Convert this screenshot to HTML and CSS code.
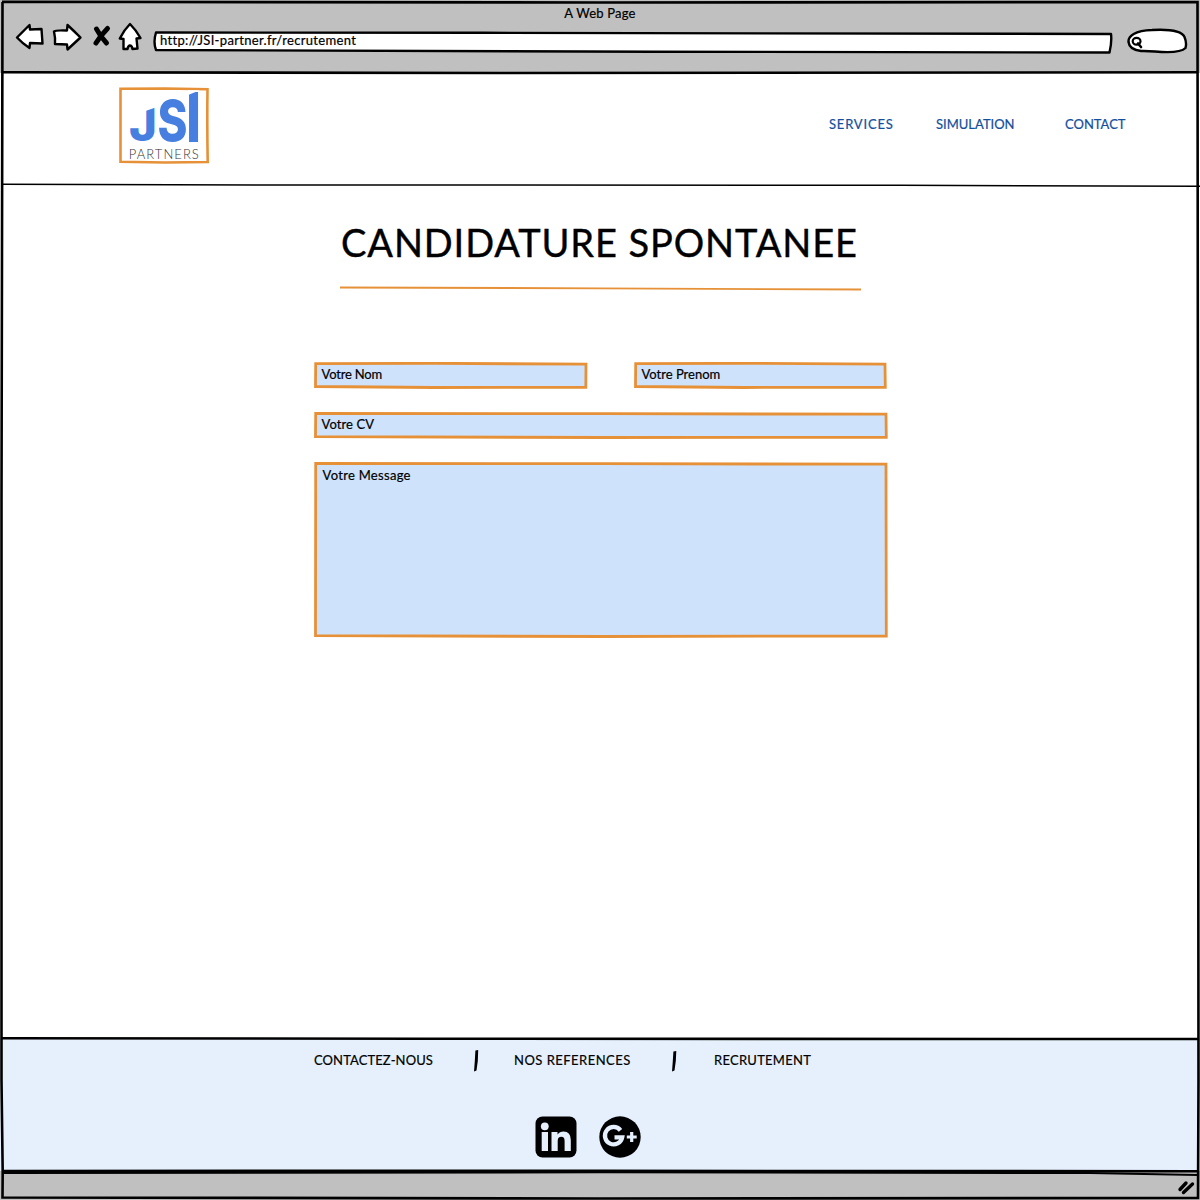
FILE: index.html
```html
<!DOCTYPE html>
<html lang="fr">
<head>
<meta charset="utf-8">
<title>A Web Page</title>
<link rel="stylesheet" href="styles.css">
</head>
<body>
<div class="window">
  <header class="chrome">
    <div class="chrome-title">A Web Page</div>
    <div class="toolbar">
      <svg class="nav-icons" width="130" height="30" viewBox="14 22 130 30">
        <g fill="#fff" stroke="#000" stroke-width="2.4" stroke-linejoin="round">
          <path d="M17 37.5 L29.5 25 L30 29.5 L41.5 29 L42.5 43.5 L30 43 L29.5 48 Q22 43 17 37.5Z"/>
          <path d="M54 31.5 Q55 30 67 30.5 L67.5 25 Q74 31 80.5 37.5 L67.5 49.5 L67 44.5 L55 44 Q55.5 38 54 31.5Z"/>
          <path d="M130 24 Q136 30 140.500 38 L136.500 38.500 L137.500 48.500 L132.500 49 Q132 45.500 129.800 45.500 Q128 46 127.500 49 L123.500 49 L123.500 39 L119.800 38.500 Q124 30 130 24Z"/>
        </g>
        <path d="M96.500 29 Q100 36 106.500 43 M107.500 28.500 Q101 35 96 43" fill="none" stroke="#000" stroke-width="5" stroke-linecap="round"/>
      </svg>
      <div class="address">
        <svg class="sketch" viewBox="0 0 960 24"><path d="M3 2.500 L330 2.800 L958 4 Q959 12 956.500 22.500 L500 21.700 L3 20 Q0 12 3 2.500Z" fill="#fff" stroke="#000" stroke-width="2.400" stroke-linejoin="round"/></svg>
        <span class="url">http://JSI-partner.fr/recrutement</span>
      </div>
      <svg class="search" width="62" height="28" viewBox="1127 27 62 28">
        <path d="M1141 51 C1132 50 1129 46 1128.500 42 C1128 36 1135 30.500 1152 30 C1170 29 1182 31.500 1184.500 37 Q1187 43 1185.500 48 C1181 52.500 1166 52.500 1155 51.500 Q1147 50.800 1141 51Z" fill="#fff" stroke="#000" stroke-width="2.400"/>
        <ellipse cx="1136.600" cy="41.300" rx="3.900" ry="3.400" fill="none" stroke="#000" stroke-width="2.200"/>
        <path d="M1138 43.500 L1141 47" stroke="#000" stroke-width="2.600" stroke-linecap="round"/>
      </svg>
    </div>
  </header>

  <div class="site-header">
    <svg class="logo" width="92" height="78" viewBox="118 86 92 78">
      <path d="M120.500 88.800 L165 88.500 L207.500 89.300 Q207 120 207.700 162 L165 162.500 L120.500 161.700Z" fill="#fff" stroke="#e69138" stroke-width="2.600"/>
      <g class="logo-mark">
        <text x="129" y="141" font-size="46" textLength="28" lengthAdjust="spacingAndGlyphs">J</text>
        <text x="157.500" y="141" font-size="57" textLength="30" lengthAdjust="spacingAndGlyphs">S</text>
        <text class="logo-i" x="184" y="141.500" font-size="69">I</text>
      </g>
      <path d="M144 105 H157 V107 L144 111.500Z M188 90.300 H200 L188 95Z" fill="#fff"/>
      <text class="logo-sub" x="128.800" y="158.800" textLength="70">PARTNERS</text>
    </svg>
    <nav class="menu">
      <a class="services">SERVICES</a><a class="simulation">SIMULATION</a><a class="contact">CONTACT</a>
    </nav>
  </div>

  <main class="content">
    <h1>CANDIDATURE SPONTANEE</h1>
    <svg class="underline" width="522" height="6" viewBox="340 286 522 6"><path d="M340 287.500 L600 288.300 L861 289.500" fill="none" stroke="#e69138" stroke-width="1.800"/></svg>
    <form class="form">
      <div class="field nom">
        <svg class="sketch" viewBox="0 0 274 27"><path d="M1.700 1.700 L120 1.300 L272 2.200 L271.800 25.300 L120 25.500 L1.500 24.500Z"/></svg>
        <label>Votre Nom</label>
      </div>
      <div class="field prenom">
        <svg class="sketch" viewBox="0 0 253 27"><path d="M1.700 1.700 L110 1.300 L251 2.200 L251.300 25.300 L110 25.500 L1.500 24.500Z"/></svg>
        <label>Votre Prenom</label>
      </div>
      <div class="field cv">
        <svg class="sketch" viewBox="0 0 574 27"><path d="M1.700 1.500 L290 1.700 L572 2.200 L572.300 25.300 L290 25.500 L1.500 24.700Z"/></svg>
        <label>Votre CV</label>
      </div>
      <div class="field message">
        <svg class="sketch" viewBox="0 0 574 176"><path d="M1.700 1.500 L290 1.700 L572 2.200 L572.300 174 L290 174.500 L1.500 173.700Z"/></svg>
        <label>Votre Message</label>
      </div>
    </form>
  </main>

  <footer class="footer">
    <div class="footer-links">
      <a class="f1">CONTACTEZ-NOUS</a>
      <svg width="6" height="24" viewBox="0 0 6 24"><path d="M2.400 1.500 L5.200 1 L4.800 12 L3.500 21.500 L1 22.500 L1.800 12Z"/></svg>
      <a class="f2">NOS REFERENCES</a>
      <svg width="6" height="24" viewBox="0 0 6 24"><path d="M2.400 2.500 L5.300 2 L4.800 12 L3.500 21.500 L1 22.500 L1.800 12Z"/></svg>
      <a class="f3">RECRUTEMENT</a>
    </div>
    <div class="social">
      <svg width="42" height="42" viewBox="0 0 42 42">
        <rect x=".5" y=".5" width="41" height="41" rx="7"/>
        <g fill="#e6f0fd"><circle cx="9.800" cy="10.300" r="3.900"/><rect x="6.700" y="16" width="6.300" height="19"/>
        <path d="M16.500 16 H22.500 V18.600 Q24.700 15.500 28.500 15.500 Q35.800 15.500 35.800 24 V35 H29.600 V25 Q29.600 20.800 26.400 20.800 Q22.700 20.800 22.700 25 V35 H16.500Z"/></g>
      </svg>
      <svg width="42" height="42" viewBox="0 0 42 42">
        <circle cx="21" cy="21" r="20.700"/>
        <g fill="none" stroke="#e6f0fd"><path d="M21.500 14.300 A8.700 8.700 0 1 0 23.200 21.300 H15.500" stroke-width="4.300"/><path d="M32.700 16 V26 M27.800 21 H37.700" stroke-width="3.200"/></g>
      </svg>
    </div>
  </footer>
  <div class="statusbar"></div>

  <svg class="frame" width="1200" height="1200" viewBox="0 0 1200 1200">
    <g fill="none" stroke="#000" stroke-width="2.600">
      <path d="M2 1.800 L600 2.500 L1197.500 2 L1198 500 L1198.500 1080 L1198 1198 L600 1198.500 L2.500 1197.500 L2.700 1172 L1.500 1080 L1.500 500 L2.500 2"/>
      <path d="M3 72.300 L500 73 L1198 72.300"/>
      <path d="M2 1038.200 L420 1038.700 L1198 1039"/>
      <path d="M2 1171 L600 1170.800 L1198 1171.300"/>
      <path d="M2 1173 L600 1172.200 L1090 1173 L1198 1175" stroke-width="2.200"/>
      <path d="M2 184.300 L300 185 L900 185.300 L1200 186.300" stroke-width="1.500"/>
      <path d="M1180 1189.500 L1186 1183 M1183.500 1192.500 L1192.500 1184" stroke-width="3.400" stroke-linecap="round"/>
    </g>
  </svg>
</div>
</body>
</html>
```
FILE: styles.css
```css
* { box-sizing: border-box; }
body {
  margin: 0;
  font-family: Lato, "Open Sans", sans-serif;
  font-size: 13px;
  line-height: 16px;
  color: #000;
  background: #fff;
}
.window {
  position: relative;
  width: 1200px;
  height: 1200px;
  display: flex;
  flex-direction: column;
  overflow: hidden;
  background: #fff;
  -webkit-text-stroke: 0.2px currentColor;
}
.frame { position: absolute; inset: 0; pointer-events: none; }
.sketch { position: absolute; inset: 0; width: 100%; height: 100%; }
svg { display: block; flex: none; }

.chrome { height: 73px; background: #c0c0c0; padding-top: 5px; }
.chrome-title { height: 17px; text-align: center; letter-spacing: 0.2px; }
.toolbar { display: flex; align-items: flex-start; padding-left: 14px; }
.address { position: relative; width: 960px; height: 24px; margin: 8px 0 0 9px; padding: 2px 0 0 7px; }
.url { position: relative; letter-spacing: 0.33px; }
.search { margin: 5px 0 0 14px; }

.site-header {
  height: 112px;
  padding: 13px 75px 0 118px;
  display: flex;
  justify-content: space-between;
}
.logo-mark { font-family: Inter, sans-serif; font-weight: 800; fill: #467fdf; -webkit-text-stroke: 0; }
.logo-i { font-weight: 600; }
.logo-sub { font-family: Lato, sans-serif; font-size: 13px; font-weight: 300; fill: #333; -webkit-text-stroke: 0; }
.menu {
  display: grid;
  grid-template-columns: 107px 129px 60px;
  padding-top: 30px;
  color: #134f9b;
  white-space: nowrap;
}
.services { letter-spacing: 0.8px; }

.content { height: 853px; padding-top: 33px; }
h1 {
  margin: 0 0 0 341px;
  height: 68px;
  font-size: 38px;
  line-height: 48px;
  font-weight: 400;
  letter-spacing: 0.9px;
  white-space: nowrap;
  -webkit-text-stroke: 0.4px #000;
}
.underline { margin-left: 340px; }
.form {
  width: 574px;
  margin: 70px 0 0 314px;
  display: grid;
  grid-template-columns: 274px 253px;
  grid-template-rows: 27px 27px 176px;
  column-gap: 46px;
  row-gap: 23px;
}
.field { position: relative; padding: 4px 7.5px; }
.field path { fill: #cfe2fb; stroke: #e69138; stroke-width: 2.8px; }
.field label { position: relative; display: block; line-height: 16px; }
.nom label { letter-spacing: -0.2px; }
.cv label { letter-spacing: 0.1px; }
.cv, .message { width: 574px; grid-column: 1 / -1; }
.message label { padding: 1px 0 0 1px; letter-spacing: 0.3px; }

.footer { height: 133px; background: #e6f0fd; padding-top: 11px; }
.footer-links {
  display: grid;
  grid-template-columns: 159px 41px 157px 43px 120px;
  padding-left: 314px;
  white-space: nowrap;
}
.footer-links a { padding-top: 3px; }
.f1 { letter-spacing: 0.1px; }
.f2 { letter-spacing: 0.48px; }
.f3 { letter-spacing: 0.27px; }
.social { display: flex; gap: 22px; padding: 43px 0 0 535px; }
.statusbar { height: 29px; background: #c0c0c0; }
```
